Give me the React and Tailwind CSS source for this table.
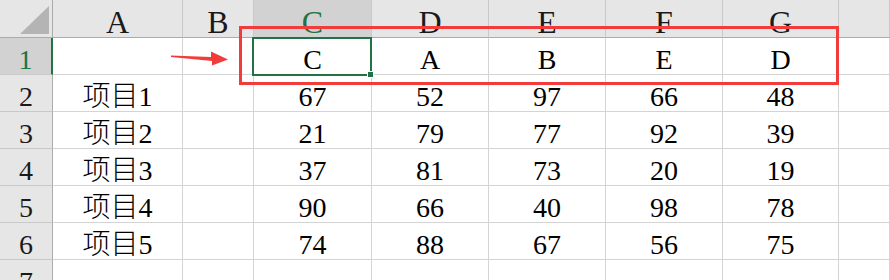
const cols = ['A', 'B', 'C', 'D', 'E', 'F', 'G', ''];

const rows = [
  ['', '', 'C', 'A', 'B', 'E', 'D', ''],
  ['项目1', '', '67', '52', '97', '66', '48', ''],
  ['项目2', '', '21', '79', '77', '92', '39', ''],
  ['项目3', '', '37', '81', '73', '20', '19', ''],
  ['项目4', '', '90', '66', '40', '98', '78', ''],
  ['项目5', '', '74', '88', '67', '56', '75', ''],
  ['', '', '', '', '', '', '', ''],
];

function Arrow() {
  return (
    <svg className="absolute left-0 top-0 pointer-events-none" width="890" height="280">
      <polygon
        points="171,55.5 211,57 211,51.5 228,59.5 212,65.5 212,61 171,57"
        fill="#f23c3c"
      />
    </svg>
  );
}

export default function App() {
  return (
    <div className="relative w-[890px] h-[280px] overflow-hidden bg-white text-black font-['Liberation_Serif','Noto_Sans_CJK_SC',serif]">
      <div className="grid grid-cols-[53px_130px_71px_118px_117px_117px_117px_116px_1fr] grid-rows-[38px_repeat(7,37px)]">
        {/* corner */}
        <div className="relative bg-[#e6e6e6] border-r border-b border-[#ababab]">
          <svg className="absolute left-0 top-0" width="52" height="37">
            <polygon points="49,6 49,34 20,34" fill="#b4b4b4" />
          </svg>
        </div>

        {cols.map((c, i) => (
          <div
            key={'h' + i}
            className={
              'text-center text-[32px] leading-[29px] pt-[8px] border-r border-b border-r-[#c9c9c9] border-b-[#ababab] ' +
              (c === 'C' ? 'bg-[#d2d2d2] text-[#217346]' : 'bg-[#e6e6e6] text-[#1a1a1a]')
            }
          >
            {c}
          </div>
        ))}

        {rows.map((r, ri) => (
          <>
            <div
              key={'r' + ri}
              className={
                'text-center text-[28px] leading-[28px] pt-[8px] border-b border-b-[#c9c9c9] ' +
                (ri === 0
                  ? 'bg-[#d2d2d2] text-[#217346] border-r-2 border-r-[#217346]'
                  : 'bg-[#e6e6e6] text-[#1a1a1a] border-r border-r-[#ababab]')
              }
            >
              {ri + 1}
            </div>
            {r.map((v, ci) => (
              <div
                key={ri + '-' + ci}
                className={
                  'whitespace-nowrap text-center text-[28px] leading-[28px] pt-[8px] border-r border-b border-[#d4d4d4] ' +
                  (ci === 0 ? 'font-light' : '')
                }
              >
                {v}
              </div>
            ))}
          </>
        ))}
      </div>

      {/* selected cell C1 */}
      <div className="absolute left-[252px] top-[37px] w-[120px] h-[39px] border-2 border-[#217346]" />
      <div className="absolute left-[367px] top-[71px] w-[7px] h-[7px] bg-[#217346] border border-white" />

      {/* annotation */}
      <div className="absolute left-[239px] top-[26px] w-[600px] h-[59px] border-[3px] border-[#f23c3c]" />
      <Arrow />
    </div>
  );
}
